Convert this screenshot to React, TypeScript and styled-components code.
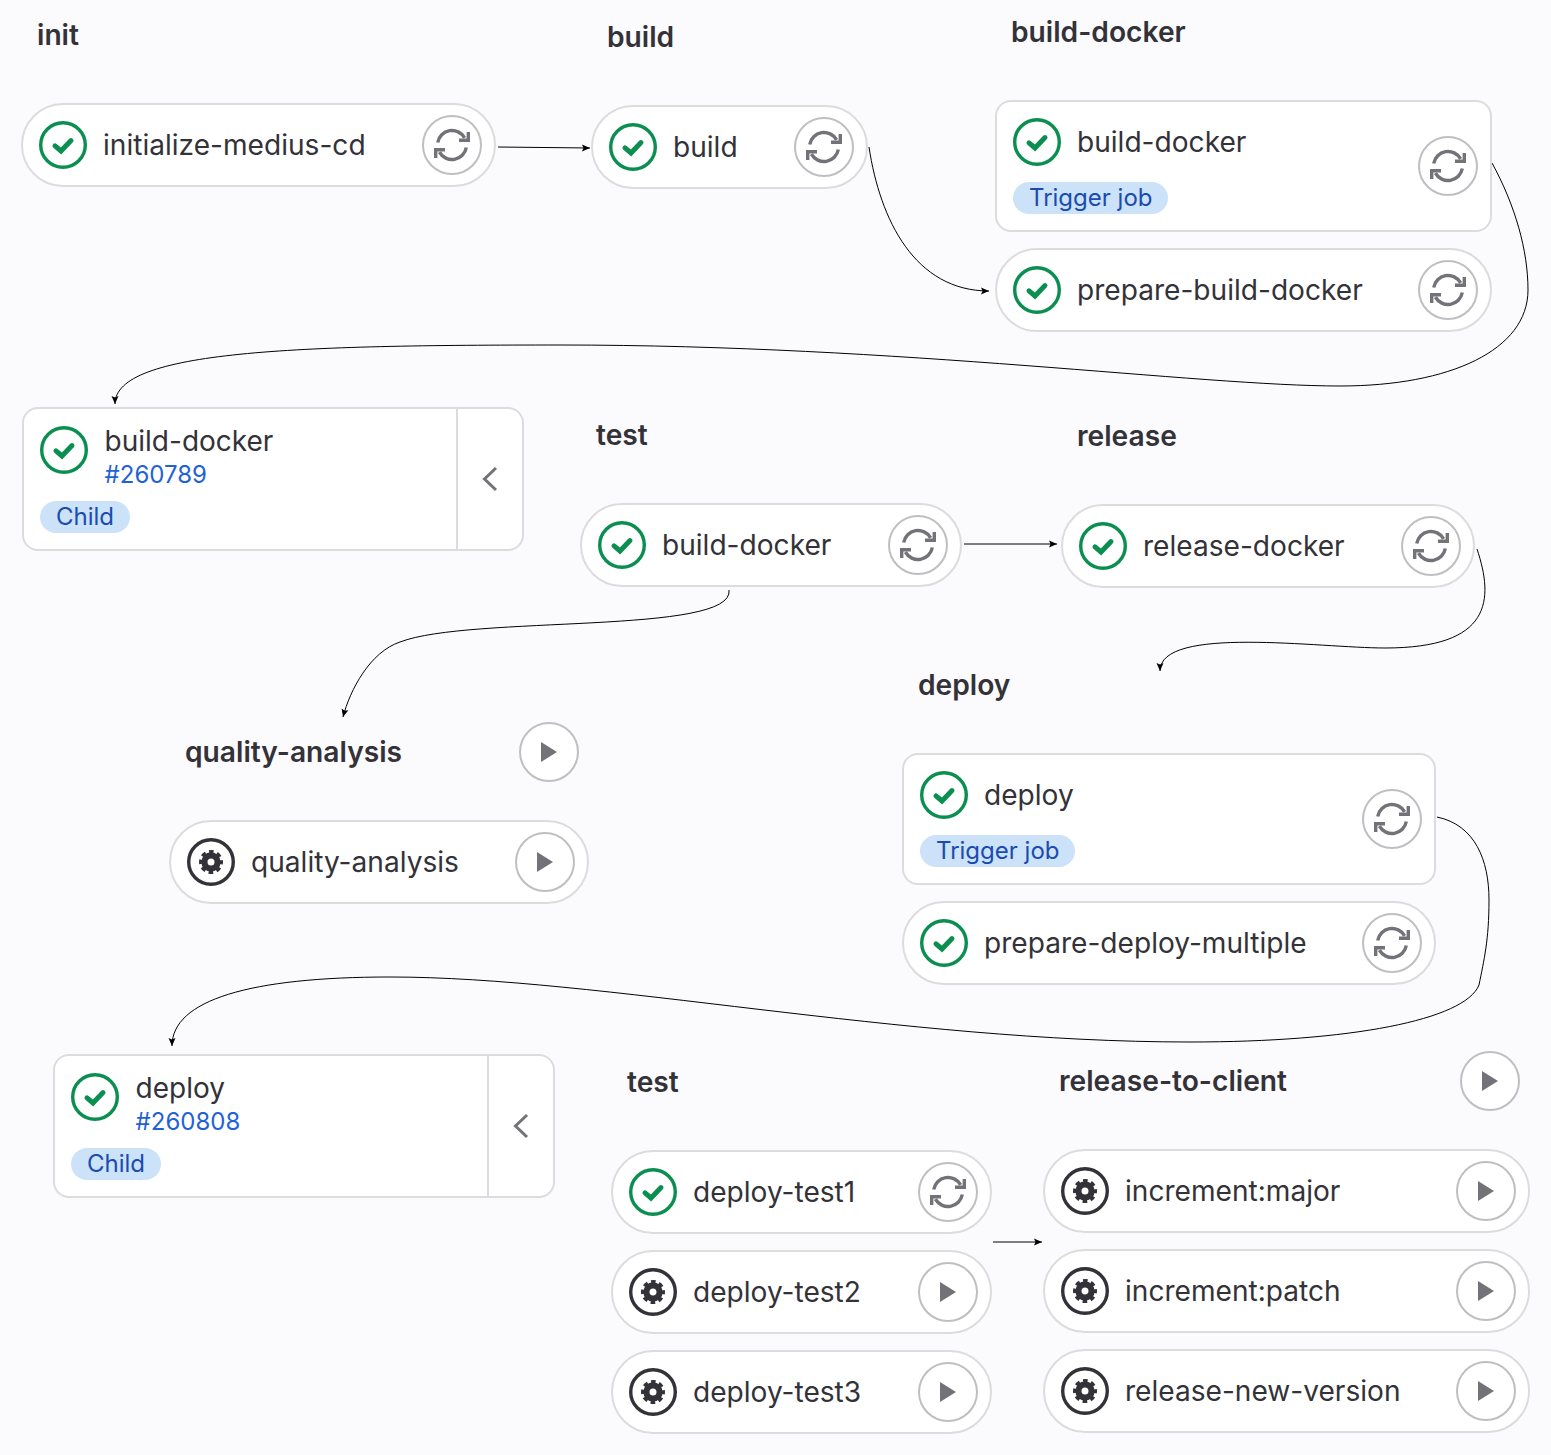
import React from "react";
import styled, { createGlobalStyle } from "styled-components";

const GlobalStyle = createGlobalStyle`
    html, body {
        margin: 0;
        background: #fbfafd;
    }
    body {
        font-family: Inter, "Noto Sans", sans-serif;
        color: #333238;
    }
`;

const Canvas = styled.div`
    position: relative;
    width: 1551px;
    height: 1455px;
    overflow: hidden;
`;

const Stage = styled.section<{ $x: number; $y: number; $w: number }>`
    position: absolute;
    left: ${(p) => p.$x}px;
    top: ${(p) => p.$y}px;
    width: ${(p) => p.$w}px;
`;

const StageHeader = styled.div`
    display: flex;
    align-items: center;
    justify-content: space-between;
    height: 58px;
    margin-bottom: 39px;
    padding: 0 10px 0 16px;
`;

const StageTitle = styled.h2`
    margin: 0;
    font-size: 28.2px;
    font-weight: 600;
    line-height: 34px;
`;

const JobList = styled.div`
    display: flex;
    flex-direction: column;
    gap: 16px;
`;

const Job = styled.div<{ $trigger?: boolean }>`
    box-sizing: border-box;
    display: flex;
    align-items: center;
    justify-content: space-between;
    height: ${(p) => (p.$trigger ? 132 : 84)}px;
    padding: 0 12px 0 16px;
    background: #fff;
    border: 2px solid #dcdcde;
    border-radius: ${(p) => (p.$trigger ? "16px" : "42px")};
`;

const JobMain = styled.div`
    display: flex;
    flex-direction: column;
    gap: 16px;
`;

const JobRow = styled.div`
    display: flex;
    align-items: center;
    gap: 16px;
`;

const JobName = styled.span`
    font-size: 28.1px;
    line-height: 34px;
    white-space: nowrap;
`;

const Badge = styled.span`
    align-self: flex-start;
    height: 32px;
    padding: 0 16px;
    border-radius: 16px;
    background: #cbe2f9;
    color: #1a4bb0;
    font-size: 24px;
    line-height: 32px;
    white-space: nowrap;
`;

const RoundButton = styled.button`
    flex: none;
    box-sizing: border-box;
    display: flex;
    align-items: center;
    justify-content: center;
    width: 60px;
    height: 60px;
    padding: 0;
    background: #fff;
    border: 2px solid #bfbfc3;
    border-radius: 50%;
`;

const Card = styled.div<{ $x: number; $y: number }>`
    position: absolute;
    left: ${(p) => p.$x}px;
    top: ${(p) => p.$y}px;
    box-sizing: border-box;
    display: flex;
    width: 502px;
    height: 144px;
    background: #fff;
    border: 2px solid #dcdcde;
    border-radius: 16px;
`;

const CardMain = styled.div`
    flex: 1;
    display: flex;
    flex-direction: column;
    gap: 11px;
    padding: 17px 16px;
`;

const CardRow = styled.div`
    display: flex;
    gap: 16.6px;
`;

const CardText = styled.div`
    display: flex;
    flex-direction: column;
    gap: 4px;
`;

const CardName = styled.span`
    font-size: 28px;
    line-height: 30px;
`;

const PipelineLink = styled.a`
    color: #1f62d6;
    font-size: 24px;
    line-height: 30px;
    text-decoration: none;
`;

const CardToggle = styled.div`
    flex: none;
    display: flex;
    align-items: center;
    justify-content: center;
    width: 64px;
    border-left: 2px solid #dcdcde;
`;

const Links = styled.svg`
    position: absolute;
    left: 0;
    top: 0;
    pointer-events: none;
`;

const IconBox = styled.svg`
    flex: none;
    display: block;
`;

function SuccessIcon() {
    return (
        <IconBox width="48" height="48" viewBox="0 0 48 48" fill="none">
            <circle cx="24" cy="24" r="22.3" stroke="#0b8f50" strokeWidth="3.4" />
            <path d="M16 24.9 22 30 32 19.6" stroke="#0b8f50" strokeWidth="5" strokeLinecap="round" strokeLinejoin="miter" />
        </IconBox>
    );
}

function ManualIcon() {
    return (
        <IconBox width="48" height="48" viewBox="0 0 48 48" fill="none">
            <circle cx="24" cy="24" r="22.3" stroke="#333238" strokeWidth="3.4" />
            <circle cx="24" cy="24" r="6.6" stroke="#333238" strokeWidth="6.2" />
            <circle cx="24" cy="24" r="10.4" stroke="#333238" strokeWidth="3.2" strokeDasharray="4.6 3.57" strokeDashoffset="2.3" />
        </IconBox>
    );
}

function RetryIcon() {
    return (
        <IconBox width="36" height="36" viewBox="0 0 36 36" fill="none" stroke="#737278" strokeWidth="3.4">
            <path d="M3.7 15.5A14.5 14.5 0 0 1 30.6 10.8" />
            <path d="M34.3 5v8.3H25" />
            <path d="M32.3 20.5A14.5 14.5 0 0 1 5.4 25.2" />
            <path d="M1.7 31v-8.3H11" />
        </IconBox>
    );
}

function PlayIcon() {
    return (
        <IconBox width="16" height="20" viewBox="0 0 16 20">
            <path d="M0 0 16 10 0 20Z" fill="#737278" />
        </IconBox>
    );
}

function ChevronIcon() {
    return (
        <IconBox width="16" height="26" viewBox="0 0 16 26" fill="none">
            <path d="M14 2 2.5 13 14 24" stroke="#737278" strokeWidth="3" />
        </IconBox>
    );
}

type JobData = { name: string; manual?: boolean; trigger?: boolean };
type StageData = { title: string; x: number; y: number; w: number; play?: boolean; jobs: JobData[] };

const stages: StageData[] = [
    { title: "init", x: 21, y: 6, w: 475, jobs: [{ name: "initialize-medius-cd" }] },
    { title: "build", x: 591, y: 8, w: 277, jobs: [{ name: "build" }] },
    { title: "build-docker", x: 995, y: 3, w: 497, jobs: [{ name: "build-docker", trigger: true }, { name: "prepare-build-docker" }] },
    { title: "test", x: 580, y: 406, w: 382, jobs: [{ name: "build-docker" }] },
    { title: "release", x: 1061, y: 407, w: 414, jobs: [{ name: "release-docker" }] },
    { title: "quality-analysis", x: 169, y: 723, w: 420, play: true, jobs: [{ name: "quality-analysis", manual: true }] },
    { title: "deploy", x: 902, y: 656, w: 534, jobs: [{ name: "deploy", trigger: true }, { name: "prepare-deploy-multiple" }] },
    {
        title: "test",
        x: 611,
        y: 1053,
        w: 381,
        jobs: [{ name: "deploy-test1" }, { name: "deploy-test2", manual: true }, { name: "deploy-test3", manual: true }],
    },
    {
        title: "release-to-client",
        x: 1043,
        y: 1052,
        w: 487,
        play: true,
        jobs: [
            { name: "increment:major", manual: true },
            { name: "increment:patch", manual: true },
            { name: "release-new-version", manual: true },
        ],
    },
];

const cards = [
    { name: "build-docker", id: "#260789", x: 22, y: 407 },
    { name: "deploy", id: "#260808", x: 53, y: 1054 },
];

const curves = [
    "M498 147 L590 148",
    "M869 147 C880 220 915 291 989 291",
    "M1492 163 C1515 205 1528 250 1528 290 C1528 350 1450 386 1340 386 C1200 386 900 345 560 345 C300 345 115 350 115 404",
    "M964 544 L1057 544",
    "M729 590 C735 635 470 615 400 642 C370 652 350 690 343 717",
    "M1477 549 C1494 600 1492 648 1385 648 C1320 648 1160 625 1160 671",
    "M1437 817 C1475 825 1489 860 1489 900 C1489 940 1484 960 1479 985 C1465 1020 1350 1042 1190 1042 C900 1042 600 977 390 977 C250 977 172 1000 172 1046",
    "M993 1242 L1042 1242",
];

function JobNode({ job }: { job: JobData }) {
    const row = (
        <JobRow>
            {job.manual ? <ManualIcon /> : <SuccessIcon />}
            <JobName>{job.name}</JobName>
        </JobRow>
    );
    return (
        <Job $trigger={job.trigger}>
            {job.trigger ? (
                <JobMain>
                    {row}
                    <Badge>Trigger job</Badge>
                </JobMain>
            ) : (
                row
            )}
            <RoundButton>{job.manual ? <PlayIcon /> : <RetryIcon />}</RoundButton>
        </Job>
    );
}

export default function App() {
    return (
        <Canvas>
            <GlobalStyle />
            <Links width="1551" height="1455" fill="none">
                <defs>
                    <marker id="arrow" markerUnits="userSpaceOnUse" markerWidth="9" markerHeight="8" refX="8" refY="4" orient="auto">
                        <path d="M0 0.5 8 4 0 7.5 1.5 4Z" fill="#000" />
                    </marker>
                </defs>
                {curves.map((d) => (
                    <path key={d} d={d} stroke="#000" strokeWidth="1" markerEnd="url(#arrow)" />
                ))}
            </Links>
            {stages.map((stage) => (
                <Stage key={stage.title + stage.x} $x={stage.x} $y={stage.y} $w={stage.w}>
                    <StageHeader>
                        <StageTitle>{stage.title}</StageTitle>
                        {stage.play && (
                            <RoundButton>
                                <PlayIcon />
                            </RoundButton>
                        )}
                    </StageHeader>
                    <JobList>
                        {stage.jobs.map((job) => (
                            <JobNode key={job.name} job={job} />
                        ))}
                    </JobList>
                </Stage>
            ))}
            {cards.map((card) => (
                <Card key={card.id} $x={card.x} $y={card.y}>
                    <CardMain>
                        <CardRow>
                            <SuccessIcon />
                            <CardText>
                                <CardName>{card.name}</CardName>
                                <PipelineLink>{card.id}</PipelineLink>
                            </CardText>
                        </CardRow>
                        <Badge>Child</Badge>
                    </CardMain>
                    <CardToggle>
                        <ChevronIcon />
                    </CardToggle>
                </Card>
            ))}
        </Canvas>
    );
}
